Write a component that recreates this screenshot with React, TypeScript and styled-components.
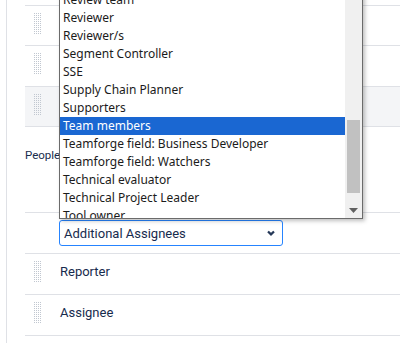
import styled, { createGlobalStyle } from "styled-components";

const GlobalStyle = createGlobalStyle`
  html, body {
    margin: 0;
    padding: 0;
    background: #ffffff;
  }
  body {
    font-family: Roboto, "Noto Sans", Arial, sans-serif;
  }
`;

const options = [
  "Review team",
  "Reviewer",
  "Reviewer/s",
  "Segment Controller",
  "SSE",
  "Supply Chain Planner",
  "Supporters",
  "Team members",
  "Teamforge field: Business Developer",
  "Teamforge field: Watchers",
  "Technical evaluator",
  "Technical Project Leader",
  "Tool owner",
];

const selected = "Team members";

function App() {
  return (
    <>
      <GlobalStyle />
      <Page>
        <Frame>
          <Rows>
            <Row />
            <Row $h={40}>
              <Grip />
            </Row>
            <Row>
              <Grip />
            </Row>
            <Row $h={40} $muted>
              <Grip />
            </Row>
            <GroupRow>
              <GroupLabel>People</GroupLabel>
            </GroupRow>
            <SelectRow>
              <SelectBox>
                <span>Additional Assignees</span>
                <Chevron viewBox="0 0 12 12">
                  <path d="M3 4.5 L6 7.4 L9 4.5" fill="none" stroke="#253858" strokeWidth="2.2" />
                </Chevron>
              </SelectBox>
            </SelectRow>
            <Row>
              <Grip />
              <FieldName>Reporter</FieldName>
            </Row>
            <Row>
              <Grip />
              <FieldName>Assignee</FieldName>
            </Row>
          </Rows>
        </Frame>

        <ListBox>
          <Options>
            {options.map((o) => (
              <Option key={o} $active={o === selected}>
                {o}
              </Option>
            ))}
          </Options>
          <ScrollTrack>
            <Thumb />
            <ArrowButton>
              <svg width="9" height="5" viewBox="0 0 9 5">
                <path d="M0 0 H9 L4.5 5 Z" fill="#606060" />
              </svg>
            </ArrowButton>
          </ScrollTrack>
        </ListBox>
      </Page>
    </>
  );
}

const Page = styled.div`
  position: relative;
  width: 400px;
  height: 343px;
  overflow: hidden;
  background: #ffffff;
`;

const Frame = styled.div`
  display: flex;
  flex-direction: column;
  box-sizing: border-box;
  height: 343px;
  margin-left: 6px;
  border-left: 1px solid #dfe1e6;
  padding-left: 18px;
`;

const Rows = styled.div`
  display: flex;
  flex-direction: column;
  margin-top: -35px;
`;

const Row = styled.div<{ $muted?: boolean; $h?: number }>`
  --row-bg: ${(p) => (p.$muted ? "#f4f5f7" : "#ffffff")};
  display: flex;
  align-items: center;
  flex-shrink: 0;
  box-sizing: border-box;
  height: ${(p) => p.$h ?? 41}px;
  padding: 0 0 5px 9px;
  background: var(--row-bg);
  border-bottom: 1px solid #dfe1e6;
`;

const Grip = styled.div`
  width: 7px;
  height: 21px;
  background-color: #c1c7d0;
  background-image: linear-gradient(90deg, transparent 1px, var(--row-bg) 1px),
    linear-gradient(transparent 1px, var(--row-bg) 1px);
  background-size: 2px 2px;
`;

const FieldName = styled.span`
  margin-left: 19px;
  font-size: 13px;
  color: #172b4d;
`;

const GroupRow = styled.div`
  flex-shrink: 0;
  box-sizing: border-box;
  height: 86px;
  padding-top: 17px;
  border-bottom: 1px solid #dfe1e6;
`;

const GroupLabel = styled.span`
  font-size: 11.5px;
  color: #172b4d;
`;

const SelectRow = styled.div`
  flex-shrink: 0;
  box-sizing: border-box;
  height: 41px;
  padding: 7px 0 0 34px;
  border-bottom: 1px solid #dfe1e6;
`;

const SelectBox = styled.div`
  display: flex;
  align-items: center;
  justify-content: space-between;
  box-sizing: border-box;
  width: 224px;
  height: 26px;
  padding: 0 5px 0 4px;
  border: 1px solid #2684ff;
  border-radius: 3px;
  font-size: 13px;
  color: #172b4d;
`;

const Chevron = styled.svg`
  width: 12px;
  height: 12px;
`;

const ListBox = styled.div`
  position: absolute;
  left: 59px;
  top: -10px;
  display: flex;
  box-sizing: border-box;
  width: 304px;
  height: 229px;
  background: #ffffff;
  border: 1px solid #6b6b6b;
  box-shadow: 2px 2px 4px rgba(0, 0, 0, 0.25);
  font-family: "Noto Sans", Arial, sans-serif;
`;

const Options = styled.div`
  flex: 1;
  overflow: hidden;
`;

const Option = styled.div<{ $active?: boolean }>`
  height: 18px;
  line-height: 18px;
  padding-left: 3px;
  font-size: 12px;
  white-space: nowrap;
  color: ${(p) => (p.$active ? "#ffffff" : "#1b1b1b")};
  background: ${(p) => (p.$active ? "#1a67d2" : "transparent")};
`;

const ScrollTrack = styled.div`
  display: flex;
  flex-direction: column;
  justify-content: flex-end;
  width: 17px;
  background: #f0f0f0;
`;

const Thumb = styled.div`
  height: 73px;
  margin: 0 2px 9px;
  background: #c1c1c1;
`;

const ArrowButton = styled.div`
  display: flex;
  align-items: center;
  justify-content: center;
  height: 16px;
`;

export default App;
